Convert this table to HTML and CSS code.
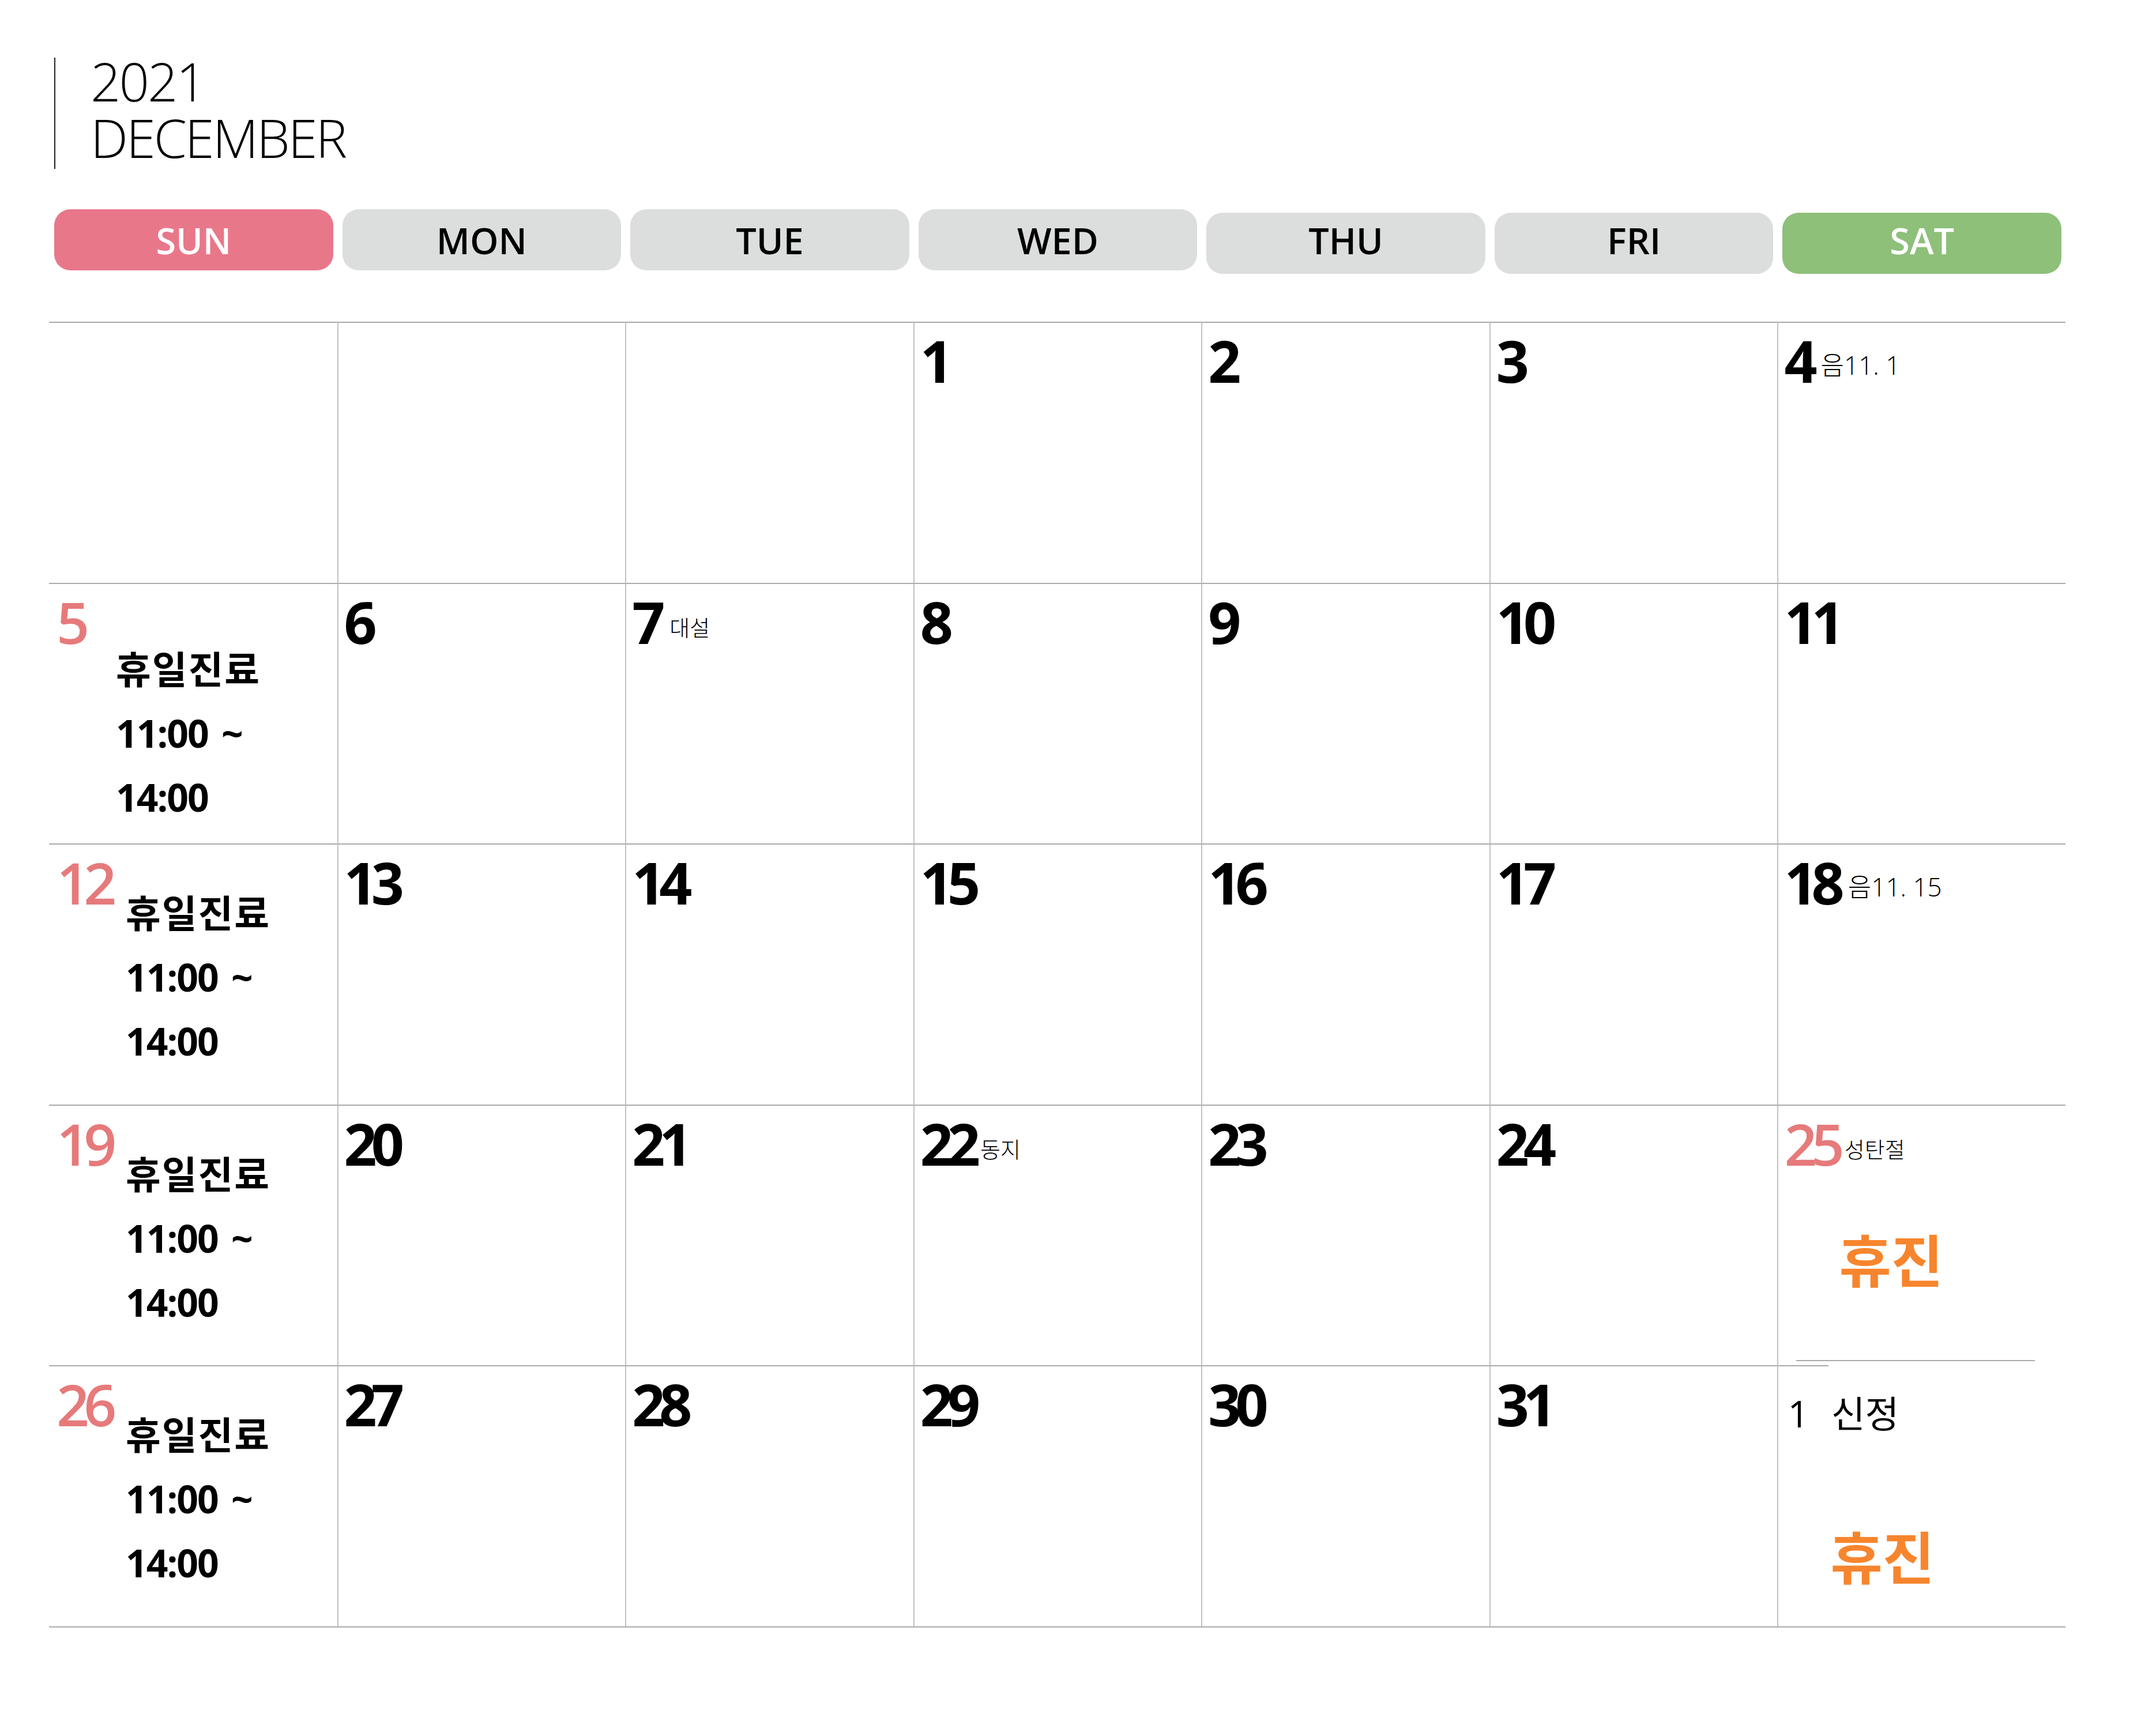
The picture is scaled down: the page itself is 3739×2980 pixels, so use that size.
FILE: index.html
```html
<!DOCTYPE html>
<html lang="ko">
<head>
    <meta charset="UTF-8">
    <meta name="viewport" content="width=device-width, initial-scale=1.0">
    <title>2021 December</title>
    <link rel="stylesheet" href="styles.css">
</head>
<body>
    <div class="page">
        <div class="title">
            <div class="title-bar"></div>
            <h1 class="title-text">
                <span class="year">2021</span>
                <span class="month">DECEMBER</span>
            </h1>
        </div>

        <div class="weekdays">
            <div class="weekday sun">SUN</div>
            <div class="weekday">MON</div>
            <div class="weekday">TUE</div>
            <div class="weekday">WED</div>
            <div class="weekday low">THU</div>
            <div class="weekday low">FRI</div>
            <div class="weekday sat low">SAT</div>
        </div>

        <div class="calendar">
            <!-- week 1 -->
            <div class="day"></div>
            <div class="day"></div>
            <div class="day"></div>
            <div class="day"><div class="date"><span class="num">1</span></div></div>
            <div class="day"><div class="date"><span class="num">2</span></div></div>
            <div class="day"><div class="date"><span class="num">3</span></div></div>
            <div class="day"><div class="date"><span class="num">4</span><span class="memo lunar">음11. 1</span></div></div>

            <!-- week 2 -->
            <div class="day">
                <div class="date"><span class="num holiday">5</span></div>
                <div class="note first">
                    <p>휴일진료</p>
                    <p class="time">11:00 ~</p>
                    <p class="time">14:00</p>
                </div>
            </div>
            <div class="day"><div class="date"><span class="num">6</span></div></div>
            <div class="day"><div class="date"><span class="num">7</span><span class="memo">대설</span></div></div>
            <div class="day"><div class="date"><span class="num">8</span></div></div>
            <div class="day"><div class="date"><span class="num">9</span></div></div>
            <div class="day"><div class="date"><span class="num">10</span></div></div>
            <div class="day"><div class="date"><span class="num">11</span></div></div>

            <!-- week 3 -->
            <div class="day">
                <div class="date"><span class="num holiday">12</span></div>
                <div class="note">
                    <p>휴일진료</p>
                    <p class="time">11:00 ~</p>
                    <p class="time">14:00</p>
                </div>
            </div>
            <div class="day"><div class="date"><span class="num">13</span></div></div>
            <div class="day"><div class="date"><span class="num">14</span></div></div>
            <div class="day"><div class="date"><span class="num">15</span></div></div>
            <div class="day"><div class="date"><span class="num">16</span></div></div>
            <div class="day"><div class="date"><span class="num">17</span></div></div>
            <div class="day"><div class="date"><span class="num">18</span><span class="memo lunar">음11. 15</span></div></div>

            <!-- week 4 -->
            <div class="day">
                <div class="date"><span class="num holiday">19</span></div>
                <div class="note">
                    <p>휴일진료</p>
                    <p class="time">11:00 ~</p>
                    <p class="time">14:00</p>
                </div>
            </div>
            <div class="day"><div class="date"><span class="num">20</span></div></div>
            <div class="day"><div class="date"><span class="num">21</span></div></div>
            <div class="day"><div class="date"><span class="num">22</span><span class="memo tight">동지</span></div></div>
            <div class="day"><div class="date"><span class="num">23</span></div></div>
            <div class="day"><div class="date"><span class="num">24</span></div></div>
            <div class="day">
                <div class="date"><span class="num holiday">25</span><span class="memo tight">성탄절</span></div>
                <div class="closed">휴진</div>
            </div>

            <!-- week 5 -->
            <div class="day">
                <div class="date"><span class="num holiday">26</span></div>
                <div class="note">
                    <p>휴일진료</p>
                    <p class="time">11:00 ~</p>
                    <p class="time">14:00</p>
                </div>
            </div>
            <div class="day"><div class="date"><span class="num">27</span></div></div>
            <div class="day"><div class="date"><span class="num">28</span></div></div>
            <div class="day"><div class="date"><span class="num">29</span></div></div>
            <div class="day"><div class="date"><span class="num">30</span></div></div>
            <div class="day"><div class="date"><span class="num">31</span></div></div>
            <div class="day patched">
                <div class="new-year">1 신정</div>
                <div class="closed later">휴진</div>
            </div>
        </div>
    </div>
</body>
</html>
```

FILE: styles.css
```css
body {
    margin: 0;
    background: #fff;
    color: #000;
    font-family: 'Open Sans', 'Noto Sans CJK KR', sans-serif;
}

.page {
    padding-top: 100px;
    width: 3739px;
}

/* Year / month heading */
.title {
    display: flex;
    align-items: flex-start;
    margin-left: 94px;
    height: 193px;
}

.title-bar {
    width: 2px;
    height: 193px;
    background: #222;
}

.title-text {
    margin: -8px 0 0 61px;
    font-size: 92px;
    font-weight: 300;
    letter-spacing: -3px;
}

.title-text span {
    display: block;
    height: 98px;
    line-height: 98px;
}

/* Weekday pills */
.weekdays {
    display: grid;
    grid-template-columns: repeat(7, 1fr);
    gap: 16px;
    width: 3481px;
    margin: 70px 0 0 94px;
    align-items: start;
}

.weekday {
    height: 106px;
    line-height: 108px;
    border-radius: 28px;
    background: #dcdedd;
    text-align: center;
    font-size: 63px;
    font-weight: 600;
}

.weekday.low {
    margin-top: 6px;
    line-height: 96px;
}

.weekday.sun {
    background: #e9778a;
    color: #fff;
}

.weekday.sat {
    background: #8ec07a;
    color: #fff;
}

/* Month grid */
.calendar {
    display: grid;
    grid-template-columns: repeat(7, 1fr);
    grid-auto-rows: 452.6px;
    width: 3497px;
    margin: 83px 0 0 85px;
    border-bottom: 2px solid #aaa;
}

.day {
    position: relative;
    box-sizing: border-box;
    padding: 15px 10px;
    border-top: 2px solid #aaa;
    border-left: 2px solid #c2c2c2;
}

.day:nth-child(7n+1) {
    border-left: none;
    padding-left: 13px;
}

.date {
    height: 100px;
    line-height: 100px;
    white-space: nowrap;
}

.num {
    font-size: 100px;
    font-weight: 700;
    letter-spacing: -10px;
}

.num.holiday {
    color: #e67a7b;
    font-weight: 600;
}

.memo {
    margin-left: 18px;
    font-size: 38px;
    font-weight: 300;
    vertical-align: 14px;
    letter-spacing: 0;
}

.memo.tight {
    margin-left: 10px;
}

.memo.lunar {
    margin-left: 16px;
    font-size: 44px;
}

/* Sunday opening hours */
.note {
    margin: -52px 0 0 120px;
}

.note.first {
    margin: -23px 0 0 103px;
}

.note p {
    margin: 0;
    font-size: 66px;
    font-weight: 700;
    line-height: 111px;
    letter-spacing: 2px;
    white-space: nowrap;
}

.note p.time {
    font-size: 66px;
    letter-spacing: -2px;
    word-spacing: 8px;
}

/* Closed days */
.closed {
    margin: 104px 0 0 95px;
    color: #f7852d;
    font-size: 98px;
    font-weight: 700;
    line-height: 1;
}

.closed.later {
    margin: 168px 0 0 80px;
}

.new-year {
    margin: 37px 0 0 6px;
    font-size: 64px;
    line-height: 1;
    word-spacing: 22px;
}

/* Sat 25 / Jan 1 boundary drawn as two offset strokes */
.day.patched {
    border-top: none;
}

.day.patched::before,
.day.patched::after {
    content: '';
    position: absolute;
    height: 2px;
    background: #aaa;
}

.day.patched::before {
    top: 0;
    left: 0;
    width: 87px;
}

.day.patched::after {
    top: -9px;
    left: 31px;
    width: 414px;
}
```
